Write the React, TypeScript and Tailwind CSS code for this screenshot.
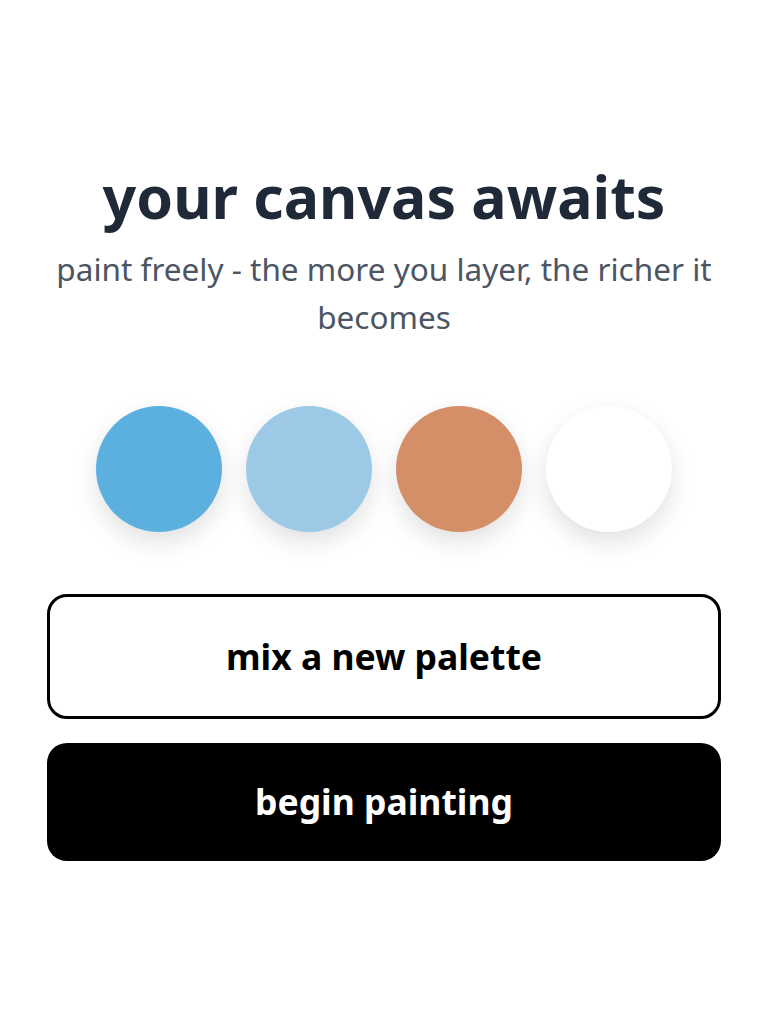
import React from 'react';

const swatches = ['#5cb0df', '#9ccae6', '#d48f68', '#ffffff'];

export default function App() {
  return (
    <div
      className="min-h-screen bg-white flex flex-col items-center justify-center px-[47px] pb-[3px]"
      style={{ fontFamily: '"Noto Sans", "Open Sans", sans-serif' }}
    >
      {/* titulo */}
      <h1 className="text-[59px] font-bold text-[#1f2937] leading-tight text-center">your canvas awaits</h1>
      <p className="mt-[11px] text-[31.5px] text-[#4b5563] leading-[48px] text-center">
        paint freely - the more you layer, the richer it becomes
      </p>

      {/* paleta */}
      <div className="flex gap-6 mt-[65px]">
        {swatches.map((c) => (
          <div
            key={c}
            className="w-[126px] h-[126px] rounded-full shadow-[0_10px_24px_rgba(0,0,0,0.12)]"
            style={{ backgroundColor: c }}
          />
        ))}
      </div>

      {/* botoes */}
      <div className="w-full flex flex-col gap-6 mt-[62px]">
        <button className="w-full h-[125px] rounded-[20px] border-[3px] border-black bg-white text-black text-[35.5px] font-bold">
          mix a new palette
        </button>
        <button className="w-full h-[118px] rounded-[20px] bg-black text-white text-[35.5px] font-bold">
          begin painting
        </button>
      </div>
    </div>
  );
}
